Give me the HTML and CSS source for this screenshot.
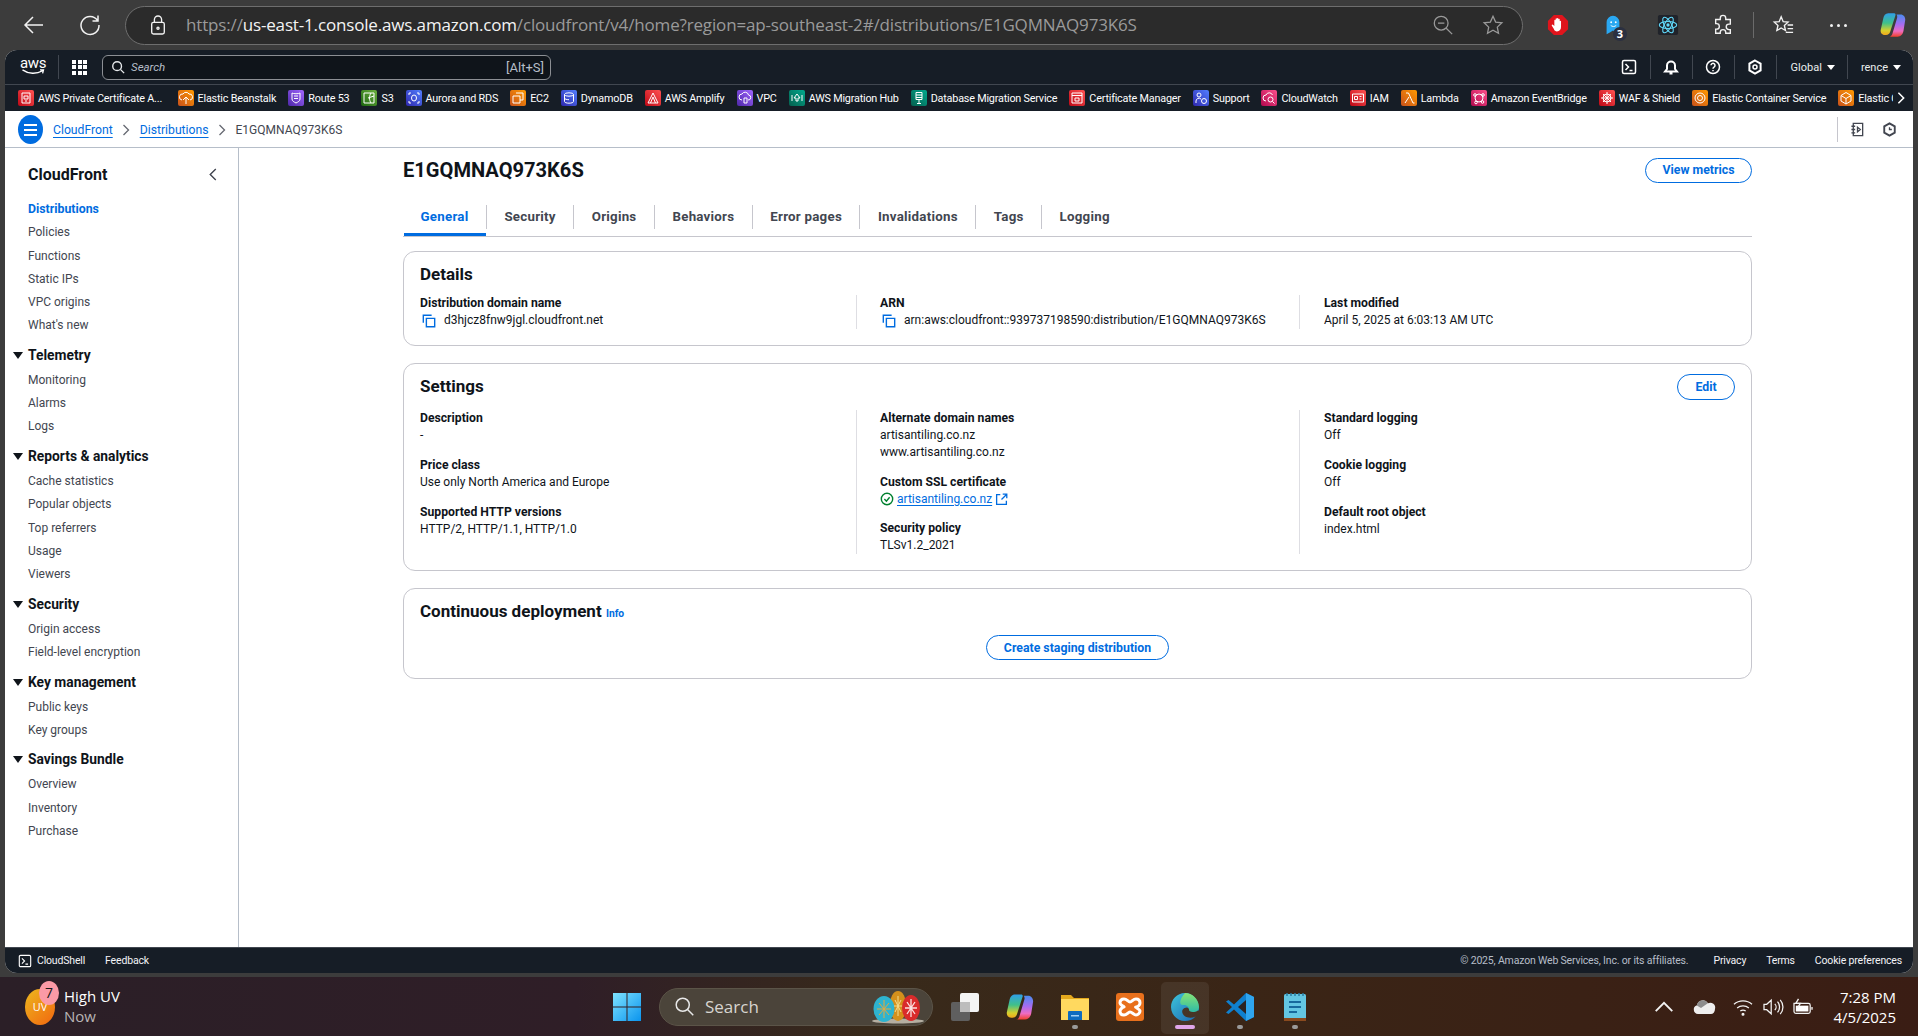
FILE: index.html
```html
<!DOCTYPE html>
<html lang="en">
<head>
    <meta charset="UTF-8">
    <title>E1GQMNAQ973K6S | Distributions | CloudFront</title>
    <link rel="stylesheet" href="styles.css">
</head>
<body>

<!-- browser toolbar -->
<header class="browser">
    <svg class="b-icon" viewBox="0 0 24 24"><path d="M21 12H3M11 4l-8 8 8 8"/></svg>
    <svg class="b-icon reload" viewBox="0 0 24 24"><path d="M19.5 7.5A9 9 0 1 0 21 12M20 2.5v5.5h-5.5"/></svg>
    <div class="urlbar">
        <svg class="lock" viewBox="0 0 20 24"><rect x="3" y="9" width="14" height="13" rx="2"/><path d="M6 9V6a4 4 0 0 1 8 0v3"/><circle cx="10" cy="15.500" r="1.200"/></svg>
        <div class="url"><span class="dim">https://</span>us-east-1.console.aws.amazon.com<span class="dim">/cloudfront/v4/home?region=ap-southeast-2#/distributions/E1GQMNAQ973K6S</span></div>
        <svg class="u-icon zoom-out" viewBox="0 0 24 24"><circle cx="10" cy="10" r="7.500"/><path d="M6.500 10h7M15.500 15.500l6.500 6.500"/></svg>
        <svg class="u-icon" viewBox="0 0 24 24"><path d="M12 2.500l2.900 6.300 6.800.8-5 4.700 1.300 6.800-6-3.400-6 3.400 1.300-6.800-5-4.700 6.800-.8z"/></svg>
    </div>
    <div class="ext-row">
        <svg class="ext" viewBox="0 0 24 24"><path d="M7.500 1h9L23 7.500v9L16.500 23h-9L1 16.500v-9z" fill="#e0141c"/><path d="M8 17c-1.500-2-2.500-3.500-3-5l1.200-.6L8 13V7c0-1 1.400-1 1.400 0v3.500V5.500c0-1 1.500-1 1.500 0V10.500V5c0-1 1.500-1 1.500 0v5.500V6c0-1 1.500-1 1.500 0v5V8c0-1 1.400-1 1.400 0v6c0 3-1.500 5-4.500 5-1.500 0-2.700-.7-3.300-2z" fill="#fff"/></svg>
        <div class="ext ghost">
            <svg viewBox="0 0 24 24"><path d="M5 22V9a7 7 0 0 1 14 0v8l-2 1-1-1-2 3-2-2-3 2z" fill="#2aa8f2"/><circle cx="10" cy="9" r="1" fill="#fff"/><circle cx="15" cy="9" r="1" fill="#fff"/><path d="M9.500 12.500c1.500 1.500 4.500 1.500 6 0" stroke="#fff" fill="none"/></svg>
            <span class="ghost-count">3</span>
        </div>
        <svg class="ext" viewBox="0 0 24 24"><rect x="1" y="1" width="22" height="22" rx="2" fill="#20232a"/><g fill="none" stroke="#61dafb" stroke-width="1.200"><ellipse cx="12" cy="12" rx="9.500" ry="3.800"/><ellipse cx="12" cy="12" rx="9.500" ry="3.800" transform="rotate(60 12 12)"/><ellipse cx="12" cy="12" rx="9.500" ry="3.800" transform="rotate(120 12 12)"/></g><circle cx="12" cy="12" r="1.800" fill="#61dafb"/></svg>
        <svg class="ext line" viewBox="0 0 24 24"><path d="M9 4.500a3 3 0 0 1 6 0V6h5v5h-1.500a3 3 0 0 0 0 6H20v4h-5v-1a3 3 0 0 0-6 0v1H4v-4.500H5a3 3 0 0 0 0-6H4V6h5z"/></svg>
        <span class="b-sep"></span>
        <svg class="ext line" viewBox="0 0 24 24"><path d="M10 3l2.200 5.400 5.300.5-4 3.600 1.200 5.500L10 15.300 5.300 18l1.200-5.500-4-3.600 5.300-.5zM17 12h6M17 16h6M15 20h8"/></svg>
        <div class="ext dots"><i></i><i></i><i></i></div>
        <svg class="ext copilot" viewBox="0 0 24 24"><use href="#copilot"/></svg>
    </div>
</header>

<div class="console">
    <!-- top navigation -->
    <nav class="topnav">
        <div class="aws-logo">
            <span class="aws-word">aws</span>
            <svg viewBox="0 0 26 8"><path d="M1 1c7 5 16 5 23 1M21 1l4 0-1 4" fill="none" stroke="#fff" stroke-width="1.500"/></svg>
        </div>
        <span class="nav-sep"></span>
        <div class="grid-btn"><i></i><i></i><i></i><i></i><i></i><i></i><i></i><i></i><i></i></div>
        <div class="searchbox">
            <svg viewBox="0 0 16 16"><circle cx="7" cy="7" r="5"/><path d="M11 11l4 4"/></svg>
            <span class="search-text">Search</span>
            <span class="search-key">[Alt+S]</span>
        </div>
        <div class="nav-right">
            <svg class="nav-icon" viewBox="0 0 16 16"><rect x="1.500" y="1.500" width="13" height="13" rx="1.500"/><path d="M4.500 5l3 3-3 3M8.500 11.500h3"/></svg>
            <span class="nav-sep"></span>
            <svg class="nav-icon" viewBox="0 0 16 16"><path d="M2 12.500h12l-2-2.500V6.500a4 4 0 0 0-8 0V10zM6.500 14.500h3" stroke-width="2"/></svg>
            <span class="nav-sep"></span>
            <svg class="nav-icon" viewBox="0 0 16 16"><circle cx="8" cy="8" r="6.500"/><path d="M6 6.300a2 2 0 1 1 3 1.800c-.7.400-1 .8-1 1.600M8 11v1.300"/></svg>
            <span class="nav-sep"></span>
            <svg class="nav-icon" viewBox="0 0 16 16"><path d="M8 1.500l5.600 3.200v6.600L8 14.500l-5.600-3.200V4.700z" stroke-width="2"/><circle cx="8" cy="8" r="2"/></svg>
            <span class="nav-sep wide"></span>
            <span class="nav-menu">Global <b class="caret"></b></span>
            <span class="nav-sep"></span>
            <span class="nav-menu">rence <b class="caret"></b></span>
        </div>
    </nav>

    <!-- favourites -->
    <div class="favbar">
        <a class="fav"><svg class="svc red" viewBox="0 0 16 16"><path d="M4 3h8v10H4zM6 6h4v3H6zM7 11h2"/></svg>AWS Private Certificate A...</a>
        <a class="fav"><svg class="svc orange" viewBox="0 0 16 16"><path d="M8 14V7M5 10l3-3 3 3M4 10a3 3 0 0 1 1-6 3.500 3.500 0 0 1 6 0 3 3 0 0 1 1 6"/></svg>Elastic Beanstalk</a>
        <a class="fav"><svg class="svc purple" viewBox="0 0 16 16"><path d="M4 3c1.500 1 6.500 1 8 0v6c0 2-2 3-4 4-2-1-4-2-4-4zM6 6h4M6 8.500h4"/></svg>Route 53</a>
        <a class="fav"><svg class="svc green" viewBox="0 0 16 16"><path d="M3 3h10v10H3zM7 8l6-2M10 3c-2 3-2 7 0 10"/></svg>S3</a>
        <a class="fav"><svg class="svc blue" viewBox="0 0 16 16"><path d="M3 5V3h2M11 3h2v2M13 11v2h-2M5 13H3v-2"/><ellipse cx="8" cy="8" rx="2.500" ry="3"/></svg>Aurora and RDS</a>
        <a class="fav"><svg class="svc orange" viewBox="0 0 16 16"><path d="M6 3h7v7h-3M3 6h7v7H3z"/></svg>EC2</a>
        <a class="fav"><svg class="svc blue" viewBox="0 0 16 16"><ellipse cx="8" cy="4.500" rx="4.500" ry="1.700"/><path d="M3.500 4.500v7c0 1 2 1.700 4.500 1.700s4.500-.7 4.500-1.700v-7M3.500 8c0 1 2 1.700 4.500 1.700"/></svg>DynamoDB</a>
        <a class="fav"><svg class="svc red" viewBox="0 0 16 16"><path d="M8 3l5 10H3zM8 7l-2.500 6M8 7l2.500 6"/></svg>AWS Amplify</a>
        <a class="fav"><svg class="svc purple" viewBox="0 0 16 16"><path d="M5 10a3 3 0 0 1 0-6 3.500 3.500 0 0 1 6.500 1 2.500 2.500 0 0 1-.5 5M7 8h3v5H7z"/></svg>VPC</a>
        <a class="fav"><svg class="svc teal" viewBox="0 0 16 16"><path d="M3 5v6M13 5v6M8 4l3 4H9v3H7V8H5z"/></svg>AWS Migration Hub</a>
        <a class="fav"><svg class="svc teal" viewBox="0 0 16 16"><path d="M5 2.500h6v7H5zM5 5h6M5 7.500h6M8 9.500v4M6 13.500h4"/></svg>Database Migration Service</a>
        <a class="fav"><svg class="svc red" viewBox="0 0 16 16"><path d="M3 3h10v10H3zM3 5.500h10M6 8h4v3H6z"/></svg>Certificate Manager</a>
        <a class="fav"><svg class="svc blue" viewBox="0 0 16 16"><circle cx="6" cy="5" r="2"/><path d="M3 13v-2a3 3 0 0 1 5-2"/><circle cx="11" cy="11" r="2.500"/></svg>Support</a>
        <a class="fav"><svg class="svc pink" viewBox="0 0 16 16"><path d="M5 11a3 3 0 0 1 0-6 3.500 3.500 0 0 1 6.500 0"/><circle cx="9.500" cy="9.500" r="2.500"/><path d="M11.500 11.500l2 2"/></svg>CloudWatch</a>
        <a class="fav"><svg class="svc red" viewBox="0 0 16 16"><path d="M2.500 4h11v8h-11zM4.500 6.500h3v3h-3zM9.500 6.500h2M9.500 9h2"/></svg>IAM</a>
        <a class="fav"><svg class="svc orange" viewBox="0 0 16 16"><path d="M5 3h2.500L12 13h1.500M8 7l-4 6"/></svg>Lambda</a>
        <a class="fav"><svg class="svc pink" viewBox="0 0 16 16"><circle cx="8" cy="8" r="4"/><circle cx="4" cy="5" r="1.300"/><circle cx="12" cy="5" r="1.300"/><circle cx="5" cy="12.500" r="1.300"/><circle cx="11.500" cy="12" r="1.300"/></svg>Amazon EventBridge</a>
        <a class="fav"><svg class="svc red" viewBox="0 0 16 16"><circle cx="8" cy="8" r="4"/><path d="M8 2v12M2 8h12M4 4l8 8M12 4l-8 8"/></svg>WAF &amp; Shield</a>
        <a class="fav"><svg class="svc orange" viewBox="0 0 16 16"><circle cx="8" cy="8" r="5"/><circle cx="8" cy="8" r="2.500"/></svg>Elastic Container Service</a>
        <a class="fav"><svg class="svc orange" viewBox="0 0 16 16"><path d="M8 2.500l5 3v5.500l-5 3-5-3V5.500zM3 5.500l5 3 5-3M8 8.500v5.500"/></svg>Elastic C</a>
        <div class="fav-more"><svg viewBox="0 0 10 16"><path d="M2 2l6 6-6 6"/></svg></div>
    </div>

    <!-- breadcrumbs -->
    <div class="crumbbar">
        <div class="menu-btn"><i></i><i></i><i></i></div>
        <a class="crumb">CloudFront</a>
        <svg class="crumb-sep" viewBox="0 0 8 12"><path d="M1.500 1l5 5-5 5"/></svg>
        <a class="crumb">Distributions</a>
        <svg class="crumb-sep" viewBox="0 0 8 12"><path d="M1.500 1l5 5-5 5"/></svg>
        <span class="crumb-current">E1GQMNAQ973K6S</span>
        <div class="crumb-tools">
            <svg viewBox="0 0 16 16"><path d="M3.500 1.500h10v13h-10zM1.500 4.500h4M1.500 8h4M1.500 11.500h4M8 5.500l3 2.500-3 2.500z"/></svg>
            <svg viewBox="0 0 16 16"><path d="M8 1.500l5.600 3.200v6.600L8 14.500l-5.600-3.200V4.700z" stroke-width="2"/><path d="M8 5.500V8h2.500"/></svg>
        </div>
    </div>

    <div class="workspace">
        <aside class="sidebar">
            <div class="side-title">
                <span>CloudFront</span>
                <svg viewBox="0 0 8 14"><path d="M7 1L1 7l6 6"/></svg>
            </div>
            <ul class="side-list">
                <li class="active">Distributions</li>
                <li>Policies</li>
                <li>Functions</li>
                <li>Static IPs</li>
                <li>VPC origins</li>
                <li>What's new</li>
            </ul>
            <h3 class="side-group">Telemetry</h3>
            <ul class="side-list">
                <li>Monitoring</li>
                <li>Alarms</li>
                <li>Logs</li>
            </ul>
            <h3 class="side-group">Reports &amp; analytics</h3>
            <ul class="side-list">
                <li>Cache statistics</li>
                <li>Popular objects</li>
                <li>Top referrers</li>
                <li>Usage</li>
                <li>Viewers</li>
            </ul>
            <h3 class="side-group">Security</h3>
            <ul class="side-list">
                <li>Origin access</li>
                <li>Field-level encryption</li>
            </ul>
            <h3 class="side-group">Key management</h3>
            <ul class="side-list">
                <li>Public keys</li>
                <li>Key groups</li>
            </ul>
            <h3 class="side-group">Savings Bundle</h3>
            <ul class="side-list">
                <li>Overview</li>
                <li>Inventory</li>
                <li>Purchase</li>
            </ul>
        </aside>

        <main class="content">
            <div class="page-head">
                <h1>E1GQMNAQ973K6S</h1>
                <button class="btn">View metrics</button>
            </div>

            <div class="tabs">
                <a class="tab current">General</a>
                <a class="tab">Security</a>
                <a class="tab">Origins</a>
                <a class="tab">Behaviors</a>
                <a class="tab">Error pages</a>
                <a class="tab">Invalidations</a>
                <a class="tab">Tags</a>
                <a class="tab">Logging</a>
            </div>

            <section class="card">
                <h2>Details</h2>
                <div class="cols">
                    <div class="col">
                        <div class="label">Distribution domain name</div>
                        <div class="value copy"><svg class="copy-ic" viewBox="0 0 16 16"><path d="M1.500 10V1.500H11M5 5h9.500v9.500H5z"/></svg>d3hjcz8fnw9jgl.cloudfront.net</div>
                    </div>
                    <div class="col">
                        <div class="label">ARN</div>
                        <div class="value copy"><svg class="copy-ic" viewBox="0 0 16 16"><path d="M1.500 10V1.500H11M5 5h9.500v9.500H5z"/></svg>arn:aws:cloudfront::939737198590:distribution/E1GQMNAQ973K6S</div>
                    </div>
                    <div class="col">
                        <div class="label">Last modified</div>
                        <div class="value">April 5, 2025 at 6:03:13 AM UTC</div>
                    </div>
                </div>
            </section>

            <section class="card">
                <div class="card-head">
                    <h2>Settings</h2>
                    <button class="btn small">Edit</button>
                </div>
                <div class="cols roomy">
                    <div class="col">
                        <div class="field">
                            <div class="label">Description</div>
                            <div class="value">-</div>
                        </div>
                        <div class="field">
                            <div class="label">Price class</div>
                            <div class="value">Use only North America and Europe</div>
                        </div>
                        <div class="field">
                            <div class="label">Supported HTTP versions</div>
                            <div class="value">HTTP/2, HTTP/1.1, HTTP/1.0</div>
                        </div>
                    </div>
                    <div class="col">
                        <div class="field">
                            <div class="label">Alternate domain names</div>
                            <div class="value">artisantiling.co.nz</div>
                            <div class="value">www.artisantiling.co.nz</div>
                        </div>
                        <div class="field">
                            <div class="label">Custom SSL certificate</div>
                            <div class="value cert">
                                <svg class="ok-ic" viewBox="0 0 16 16"><circle cx="8" cy="8" r="6.500"/><path d="M5 8l2.300 2.500L11 6"/></svg>
                                <a class="link">artisantiling.co.nz <svg class="ext-ic" viewBox="0 0 16 16"><path d="M6.500 2H2v12h12V9.500M9.500 1.500h5v5M14.500 1.500L8 8"/></svg></a>
                            </div>
                        </div>
                        <div class="field">
                            <div class="label">Security policy</div>
                            <div class="value">TLSv1.2_2021</div>
                        </div>
                    </div>
                    <div class="col">
                        <div class="field">
                            <div class="label">Standard logging</div>
                            <div class="value">Off</div>
                        </div>
                        <div class="field">
                            <div class="label">Cookie logging</div>
                            <div class="value">Off</div>
                        </div>
                        <div class="field">
                            <div class="label">Default root object</div>
                            <div class="value">index.html</div>
                        </div>
                    </div>
                </div>
            </section>

            <section class="card deploy">
                <h2>Continuous deployment <a class="info">Info</a></h2>
                <div class="center-row">
                    <button class="btn">Create staging distribution</button>
                </div>
            </section>
        </main>
    </div>

    <footer class="console-foot">
        <svg viewBox="0 0 16 16"><rect x="1.500" y="1.500" width="13" height="13" rx="1.500"/><path d="M4.500 5l3 3-3 3M8.500 11.500h3"/></svg>
        <span class="foot-link">CloudShell</span>
        <span class="foot-link">Feedback</span>
        <span class="foot-copy">© 2025, Amazon Web Services, Inc. or its affiliates.</span>
        <span class="foot-link">Privacy</span>
        <span class="foot-link">Terms</span>
        <span class="foot-link">Cookie preferences</span>
    </footer>
</div>

<!-- windows taskbar -->
<div class="taskbar">
    <div class="widget">
        <div class="uv">UV<span class="uv-badge">7</span></div>
        <div class="widget-text">
            <div>High UV</div>
            <div class="now">Now</div>
        </div>
    </div>

    <div class="task-center">
        <svg class="task-ic" viewBox="0 0 30 30"><defs><linearGradient id="win" x1="0" y1="0" x2="1" y2="1"><stop offset="0" stop-color="#7fe3ff"/><stop offset="1" stop-color="#0a94ee"/></linearGradient></defs><path d="M1 1h13.500v13.500H1zM15.500 1H29v13.500H15.500zM1 15.500h13.500V29H1zM15.500 15.500H29V29H15.500z" fill="url(#win)"/></svg>
        <div class="task-search">
            <svg viewBox="0 0 24 24"><circle cx="10" cy="10" r="7.500"/><path d="M15.500 15.500L22 22"/></svg>
            <span>Search</span>
            <svg class="eggs" viewBox="0 0 56 34"><ellipse cx="28" cy="31" rx="26" ry="2.500" fill="#d8d2c4" opacity=".75"/><ellipse cx="28" cy="16" rx="8.500" ry="15" fill="#d4901c"/><ellipse cx="41" cy="18" rx="9" ry="13" fill="#d92b2b"/><ellipse cx="14" cy="19" rx="10.500" ry="13" fill="#2eb3cf"/><path d="M14 10v18M7 19h14M9 13l10 12M19 13L9 25" stroke="#e8a83a" stroke-width="1"/><path d="M28 6v20M24 16h8M25 10l6 12M31 10l-6 12" stroke="#f5dc8c" stroke-width="1"/><path d="M41 9v18M35 18h12M37 12l8 12M45 12l-8 12" stroke="#fbe1e1" stroke-width="1.300"/></svg>
        </div>
        <svg class="task-ic" viewBox="0 0 30 30"><rect x="1" y="10" width="19" height="19" rx="2" fill="#5f5f5f"/><rect x="10" y="1" width="19" height="19" rx="2" fill="#f4f4f4"/><rect x="10" y="10" width="10" height="10" fill="#bdbdbd"/></svg>
        <svg class="task-ic" viewBox="0 0 24 24"><use href="#copilot"/></svg>
        <div class="task-slot">
            <svg class="task-ic" viewBox="0 0 30 30"><path d="M1 3h10l3 3h15v22H1z" fill="#e5a91d"/><rect x="1" y="7" width="28" height="21" fill="#ffd95f"/><path d="M9 19h12a1 1 0 0 1 1 1v8H8v-8a1 1 0 0 1 1-1z" fill="#0d6cbf"/><rect x="11" y="23" width="8" height="1.500" fill="#9fd0f5"/></svg>
            <i class="run-dot"></i>
        </div>
        <svg class="task-ic" viewBox="0 0 30 30"><rect x="1" y="1" width="28" height="28" rx="3" fill="#e8701c"/><path d="M9 7c3 0 4 3 6 3s3-3 6-3 4 2 4 4-2 4-4 4 4 2 4 4-2 4-4 4-4-3-6-3-3 3-6 3-4-2-4-4 3-4 4-4-4-2-4-4 1-4 4-4z" fill="none" stroke="#fff" stroke-width="3"/></svg>
        <div class="task-slot active">
            <svg class="task-ic" viewBox="0 0 30 30"><defs><linearGradient id="edgeA" x1="0" y1="0" x2="1" y2="1"><stop offset="0" stop-color="#2fc2d8"/><stop offset="1" stop-color="#0a5bb0"/></linearGradient><linearGradient id="edgeB" x1="0" y1="0" x2="0" y2="1"><stop offset="0" stop-color="#7fe26a"/><stop offset="1" stop-color="#1fb6a0"/></linearGradient></defs><path d="M15 1C7 1 1 7.500 1 15c0 8 6.500 14 14 14 4 0 8-1.500 10.500-4.500-4 2-9 1.500-11.500-1-2.500-2.500-2.500-6 .5-7.500 3-1.500 5 .5 5 2.500h9.500C29 9 24 1 15 1z" fill="url(#edgeA)"/><path d="M15 1c7 0 14 6 14 14 0 4-3 5-6 5-3 0-4-1-4-2.500 0-3-3-5-6-4.500C10 13.500 8 9 15 1z" fill="url(#edgeB)"/></svg>
            <i class="run-dot wide"></i>
        </div>
        <div class="task-slot">
            <svg class="task-ic" viewBox="0 0 30 30"><path d="M21 1l8 4v20l-8 4-12-11.500L3.500 22 1 20.500 7 15 1 9.500 3.500 8 9 12.500z" fill="#0f80cf"/><path d="M21 8L13 15l8 7z" fill="#2b2222"/><path d="M21 1l8 4v20l-8 4z" fill="#2fa5ee"/></svg>
            <i class="run-dot"></i>
        </div>
        <div class="task-slot">
            <svg class="task-ic" viewBox="0 0 30 30"><rect x="4" y="2" width="22" height="27" rx="1.500" fill="#63c6e2"/><rect x="4" y="26" width="22" height="3" fill="#8a4a1e"/><path d="M9 10h12M9 15h12M9 20h8" stroke="#176a9c" stroke-width="2"/><path d="M7 1v3M11 1v3M15 1v3M19 1v3M23 1v3" stroke="#2a7ea3" stroke-width="1.500"/></svg>
            <i class="run-dot"></i>
        </div>
    </div>

    <div class="tray">
        <svg class="tray-ic" viewBox="0 0 16 10"><path d="M2 8l6-6 6 6"/></svg>
        <svg class="cloud" viewBox="0 0 24 16"><path d="M6 15a4.500 4.500 0 0 1-1-8.800 6 6 0 0 1 11-2A5 5 0 0 1 23 10c0 3-2 5-4 5z" fill="#eee"/><path d="M4.800 6.400a6 6 0 0 1 11-2.200L9 9z" fill="#8d8d8d"/></svg>
        <svg class="tray-ic wifi" viewBox="0 0 24 20"><path d="M2 7c5.500-5 14.500-5 20 0M5.500 11c3.500-3 9.500-3 13 0M9 14.500c1.500-1 4.500-1 6 0"/><circle cx="12" cy="18" r="1" fill="#fff"/></svg>
        <svg class="tray-ic" viewBox="0 0 24 20"><path d="M2 7v6h3l5 4.500V2.500L5 7zM14 6.500a5 5 0 0 1 0 7M17 4a9 9 0 0 1 0 12M20 2a12 12 0 0 1 0 16"/></svg>
        <svg class="tray-ic batt" viewBox="0 0 24 20"><path d="M2 6h16a2 2 0 0 1 2 2v7a2 2 0 0 1-2 2H4a2 2 0 0 1-2-2z"/><path d="M4 8.500h14v6.500H4z" fill="#fff" stroke="none"/><path d="M22 10v3M7 1L4 6h5l-3 5" stroke-width="1.500"/></svg>
        <div class="clock">
            <div>7:28 PM</div>
            <div>4/5/2025</div>
        </div>
    </div>
</div>

<svg class="defs" width="0" height="0">
    <defs>
        <linearGradient id="coA" x1="0.300" y1="0" x2="0.300" y2="1"><stop offset="0" stop-color="#2f9fe8"/><stop offset=".45" stop-color="#3fc08a"/><stop offset=".8" stop-color="#d8cf2c"/><stop offset="1" stop-color="#f2a81c"/></linearGradient>
        <linearGradient id="coB" x1="0.500" y1="0" x2="0.500" y2="1"><stop offset="0" stop-color="#4a8cf0"/><stop offset=".45" stop-color="#a76cf0"/><stop offset=".75" stop-color="#ee6cc0"/><stop offset="1" stop-color="#f0402c"/></linearGradient>
        <symbol id="copilot" viewBox="0 0 24 24">
            <path d="M8 2h5c1 0 1.500 1 1 2l-4.500 14c-.5 1.500-1.500 2.500-3.500 2.500H5C2.500 20.500 1 18.500 1.500 16l2-9C4 4 5.500 2 8 2z" fill="url(#coA)"/>
            <path d="M15 3h3.500c2.500 0 4 2 4 4.500L21 17c-.5 3-2.500 5-5 5H9c1 0 2-1 2.500-2.500L15.500 6c.3-1 .2-2-.5-3z" fill="url(#coB)"/>
        </symbol>
    </defs>
</svg>

</body>
</html>
```

FILE: styles.css
```css
/* ===== page ===== */
* {
    box-sizing: border-box;
}

body {
    margin: 0;
    height: 100vh;
    display: flex;
    flex-direction: column;
    overflow: hidden;
    background: #3c3c3c;
    font-family: "Roboto", "Liberation Sans", sans-serif;
    font-size: 12px;
    color: #000716;
}

svg {
    display: block;
    flex: none;
}

h1, h2, h3, ul {
    margin: 0;
    padding: 0;
}

.defs {
    position: absolute;
}

/* ===== browser toolbar ===== */
.browser {
    height: 50px;
    flex: none;
    display: flex;
    align-items: center;
    padding-left: 22px;
    font-family: "Open Sans", sans-serif;
}

.b-icon {
    width: 24px;
    height: 24px;
    fill: none;
    stroke: #f2f2f2;
    stroke-width: 1.500;
}

.b-icon.reload {
    margin-left: 32px;
}

.urlbar {
    margin-left: 23px;
    width: 1398px;
    height: 39px;
    flex: none;
    display: flex;
    align-items: center;
    padding: 0 18px 0 23px;
    background: #2b2b2b;
    border: 1px solid #6e6e6e;
    border-radius: 20px;
}

.lock {
    width: 18px;
    height: 22px;
    fill: none;
    stroke: #f2f2f2;
    stroke-width: 1.500;
}

.url {
    margin-left: 19px;
    padding-bottom: 2px;
    flex: 1;
    font-size: 17px;
    color: #f4f4f4;
    white-space: nowrap;
    letter-spacing: -0.16px;
}

.dim {
    color: #9a9a9a;
}

.u-icon {
    width: 22px;
    height: 22px;
    fill: none;
    stroke: #9a9a9a;
    stroke-width: 1.400;
}

.zoom-out {
    margin-right: 28px;
}

.ext-row {
    display: flex;
    align-items: center;
    margin-left: 24px;
}

.ext {
    width: 22px;
    height: 22px;
    margin-right: 33px;
}

.ext.line {
    fill: none;
    stroke: #f2f2f2;
    stroke-width: 1.500;
}

.ghost {
    position: relative;
}

.ghost-count {
    position: absolute;
    left: 11px;
    top: 13px;
    width: 14px;
    height: 14px;
    border-radius: 7px;
    background: #2b3040;
    color: #fff;
    font-size: 11px;
    font-weight: 700;
    line-height: 14px;
    text-align: center;
}

.b-sep {
    width: 1px;
    height: 26px;
    background: #6b6b6b;
    margin-left: -14px;
    margin-right: 18px;
}

.dots {
    display: flex;
    align-items: center;
    justify-content: center;
    gap: 4px;
}

.dots i {
    width: 3px;
    height: 3px;
    border-radius: 50%;
    background: #f2f2f2;
}

.copilot {
    width: 28px;
    height: 28px;
    margin-left: -3px;
    margin-right: 0;
}

/* ===== console frame ===== */
.console {
    height: 923px;
    flex: none;
    margin: 0 5px;
    display: flex;
    flex-direction: column;
    border-radius: 12px;
    overflow: hidden;
    background: #fff;
}

/* ===== top nav ===== */
.topnav {
    height: 34px;
    flex: none;
    display: flex;
    align-items: center;
    padding: 0 12px 0 15px;
    background: #161d26;
    color: #fff;
}

.aws-logo {
    width: 26px;
    color: #fff;
}

.aws-word {
    display: block;
    font-size: 15px;
    line-height: 11px;
    text-align: center;
    letter-spacing: -0.3px;
}

.aws-logo svg {
    width: 26px;
    height: 7px;
}

.nav-sep {
    width: 1px;
    height: 24px;
    background: #414750;
}

.topnav > .nav-sep {
    margin: 0 13px 0 12px;
}

.grid-btn {
    width: 15px;
    display: grid;
    grid-template-columns: repeat(3, 4px);
    gap: 1.500px;
}

.grid-btn i {
    height: 4px;
    background: #fff;
}

.searchbox {
    margin-left: 15px;
    width: 449px;
    height: 25px;
    display: flex;
    align-items: center;
    padding: 0 6px 0 8px;
    background: #0f141a;
    border: 1px solid #8c8f94;
    border-radius: 6px;
    color: #b6bec9;
    font-size: 11.500px;
}

.searchbox svg {
    width: 14px;
    height: 14px;
    fill: none;
    stroke: #e6e8ea;
    stroke-width: 1.600;
}

.search-text {
    margin-left: 6px;
    flex: 1;
    font-style: italic;
}

.search-key {
    font-size: 13px;
}

.nav-right {
    margin-left: auto;
    display: flex;
    align-items: center;
}

.nav-right .nav-sep {
    margin: 0 12.500px;
}

.nav-right .nav-sep.wide {
    margin-right: 14px;
}

.nav-icon {
    width: 16px;
    height: 16px;
    fill: none;
    stroke: #fff;
    stroke-width: 1.500;
}

.nav-menu {
    display: flex;
    align-items: center;
    gap: 5px;
    font-size: 11px;
    color: #eaeded;
}

.caret {
    width: 0;
    height: 0;
    border-left: 4px solid transparent;
    border-right: 4px solid transparent;
    border-top: 5px solid #fff;
}

/* ===== favourites ===== */
.favbar {
    height: 27px;
    flex: none;
    position: relative;
    display: flex;
    align-items: center;
    gap: 12px;
    padding-left: 13px;
    background: #161d26;
    border-top: 1px solid #414750;
    white-space: nowrap;
    color: #fff;
    font-size: 10.800px;
    letter-spacing: -0.2px;
}

.fav {
    display: flex;
    align-items: center;
    gap: 4px;
}

.fav:first-child {
    margin-right: 3.500px;
}

.svc {
    width: 16px;
    height: 16px;
    padding: 0;
    border-radius: 2px;
    fill: none;
    stroke: #fff;
    stroke-width: 1;
}

.red { background: linear-gradient(45deg, #bd0816, #ff5252); }
.orange { background: linear-gradient(45deg, #c8511b, #ff9900); }
.purple { background: linear-gradient(45deg, #4d27a8, #a166ff); }
.green { background: linear-gradient(45deg, #1b660f, #6cae3e); }
.blue { background: linear-gradient(45deg, #2e27ad, #527fff); }
.teal { background: linear-gradient(45deg, #055f4e, #01a88d); }
.pink { background: linear-gradient(45deg, #b0084d, #ff4f8b); }

.fav-more {
    position: absolute;
    right: 0;
    top: 0;
    bottom: 0;
    width: 20px;
    padding-left: 3px;
    display: flex;
    align-items: center;
    background: #161d26;
}

.fav-more svg {
    width: 10px;
    height: 14px;
    fill: none;
    stroke: #fff;
    stroke-width: 1.800;
}

/* ===== breadcrumbs ===== */
.crumbbar {
    height: 37px;
    flex: none;
    display: flex;
    align-items: center;
    padding: 1px 0 0 13px;
    background: #fff;
    border-bottom: 1px solid #b6bec9;
    font-size: 12.200px;
}

.menu-btn {
    width: 25px;
    height: 29px;
    border-radius: 50%;
    background: #006ce0;
    display: flex;
    flex-direction: column;
    align-items: center;
    justify-content: center;
    gap: 3px;
}

.menu-btn i {
    width: 13px;
    height: 2px;
    background: #fff;
}

.crumb {
    color: #006ce0;
    text-decoration: underline;
    text-underline-offset: 3px;
}

.menu-btn + .crumb {
    margin-left: 10px;
}

.crumb-sep {
    width: 8px;
    height: 12px;
    margin: 0 9.500px;
    fill: none;
    stroke: #656871;
    stroke-width: 1.300;
}

.crumb-current {
    font-size: 12px;
    color: #424650;
}

.crumb-tools {
    margin-left: auto;
    display: flex;
    align-items: center;
    gap: 17px;
    height: 25px;
    padding: 0 16px 0 12px;
    border-left: 1px solid #c6c6cd;
}

.crumb-tools svg {
    width: 15px;
    height: 15px;
    fill: none;
    stroke: #424650;
    stroke-width: 1.400;
}

/* ===== workspace ===== */
.workspace {
    flex: 1;
    min-height: 0;
    display: flex;
}

.sidebar {
    width: 234px;
    flex: none;
    padding: 16px 0 0 23px;
    border-right: 1px solid #b6bec9;
    color: #424650;
}

.side-title {
    display: flex;
    align-items: center;
    justify-content: space-between;
    height: 20px;
    padding-right: 21px;
    margin-bottom: 14px;
    font-size: 16px;
    font-weight: 700;
    color: #0f141a;
}

.side-title svg {
    width: 8px;
    height: 13px;
    fill: none;
    stroke: #424650;
    stroke-width: 1.500;
}

.side-list {
    list-style: none;
}

.side-list li {
    height: 23.250px;
    line-height: 23.250px;
}

.side-list .active {
    color: #006ce0;
    font-size: 12.300px;
    font-weight: 700;
}

.side-group {
    position: relative;
    height: 25px;
    margin-top: 6.400px;
    line-height: 23px;
    font-size: 13.800px;
    font-weight: 700;
    color: #0f141a;
}

.side-group::before {
    content: "";
    position: absolute;
    left: -15px;
    top: 8px;
    border-left: 5px solid transparent;
    border-right: 5px solid transparent;
    border-top: 7px solid #0f141a;
}

/* ===== main content ===== */
.content {
    flex: 1;
    min-width: 0;
    padding: 9px 161px 0 164px;
}

.page-head {
    height: 26px;
    display: flex;
    align-items: center;
    justify-content: space-between;
}

h1 {
    font-size: 20.100px;
    font-weight: 700;
    color: #0f141a;
}

.btn {
    height: 25px;
    padding: 0 16.500px;
    background: #fff;
    border: 1.500px solid #006ce0;
    border-radius: 13px;
    color: #006ce0;
    font-family: inherit;
    font-size: 12.300px;
    font-weight: 700;
}

.btn.small {
    height: 26px;
    width: 58px;
    padding: 0;
}

.tabs {
    height: 41px;
    margin-top: 13px;
    padding-top: 2px;
    display: flex;
    align-items: center;
    border-bottom: 1px solid #c6c6cd;
}

.tab {
    height: 24px;
    line-height: 24px;
    padding: 0 17.500px;
    border-left: 1px solid #c6c6cd;
    color: #424650;
    font-size: 13.300px;
    font-weight: 700;
    letter-spacing: 0.25px;
}

.tab.current {
    position: relative;
    border-left: 0;
    color: #006ce0;
}

.tab.current::after {
    content: "";
    position: absolute;
    left: 1px;
    right: 0;
    top: 28px;
    height: 3px;
    background: #006ce0;
}

.card {
    margin-top: 14px;
    padding: 8px 16px 16px;
    border: 1px solid #c6c6cd;
    border-radius: 12px;
    background: #fff;
}

.card + .card {
    margin-top: 17px;
}

.card.deploy {
    margin-top: 17px;
    padding-bottom: 18px;
}

h2 {
    height: 28px;
    line-height: 28px;
    font-size: 17px;
    font-weight: 700;
    color: #0f141a;
}

.card-head {
    display: flex;
    justify-content: space-between;
    height: 28px;
}

.card-head .btn {
    margin-top: 2px;
}

.info {
    color: #006ce0;
    font-size: 10.300px;
}

.cols {
    display: grid;
    grid-template-columns: 436px 443px 1fr;
    margin-top: 7px;
}

.cols.roomy {
    margin-top: 10px;
}

.col {
    padding-left: 23px;
    border-left: 1px solid #dedee3;
}

.col:first-child {
    padding-left: 0;
    border-left: 0;
}

.col:last-child {
    padding-left: 24px;
}

.label {
    line-height: 17px;
    font-size: 12.200px;
    font-weight: 700;
    color: #0f141a;
}

.value {
    line-height: 17px;
    color: #0f141a;
}

.field {
    margin-bottom: 13px;
}

.field:last-child {
    margin-bottom: 0;
}

.copy,
.cert {
    display: flex;
    align-items: center;
}

.cert {
    height: 16px;
}

.copy-ic {
    width: 14px;
    height: 14px;
    margin: 0 8px 0 2px;
    fill: none;
    stroke: #006ce0;
    stroke-width: 1.600;
}

.ok-ic {
    width: 14px;
    height: 14px;
    margin-right: 3px;
    fill: none;
    stroke: #00802f;
    stroke-width: 1.600;
}

.link {
    display: flex;
    align-items: center;
    gap: 3px;
    color: #006ce0;
    text-decoration: underline;
    text-underline-offset: 2px;
}

.ext-ic {
    width: 13px;
    height: 13px;
    fill: none;
    stroke: #006ce0;
    stroke-width: 1.600;
}

.center-row {
    display: flex;
    justify-content: center;
    margin-top: 10px;
}

/* ===== console footer ===== */
.console-foot {
    height: 26px;
    flex: none;
    display: flex;
    align-items: center;
    gap: 20px;
    padding: 0 11px 0 13px;
    background: #161d26;
    border-top: 1px solid #414750;
    color: #fff;
    font-size: 10.500px;
    letter-spacing: -0.17px;
}

.console-foot svg {
    width: 14px;
    height: 14px;
    margin-right: -15px;
    fill: none;
    stroke: #fff;
    stroke-width: 1.300;
}

.foot-link {
    color: #f3f3f7;
}

.foot-copy {
    margin-left: auto;
    margin-right: 5px;
    color: #b6bec9;
}

/* ===== taskbar ===== */
.taskbar {
    height: 59px;
    margin-top: 4px;
    flex: none;
    position: relative;
    display: flex;
    align-items: center;
    justify-content: space-between;
    background: linear-gradient(90deg, #2b1f27 0%, #2f1e27 30%, #382a1b 45%, #3a2516 65%, #3a1d14 100%);
    color: #fff;
    font-family: "Open Sans", sans-serif;
}

.widget {
    display: flex;
    align-items: center;
    gap: 9px;
    padding-left: 25px;
    font-size: 15px;
    line-height: 20px;
}

.widget-text {
    margin-top: -2px;
}

.uv {
    position: relative;
    width: 30px;
    height: 36px;
    border-radius: 50%;
    background: linear-gradient(135deg, #ecb81e, #f2660f);
    font-size: 11px;
    line-height: 36px;
    text-align: center;
}

.uv-badge {
    position: absolute;
    left: 14px;
    top: -8px;
    width: 20px;
    height: 24px;
    border-radius: 50%;
    background: #fb9aa6;
    color: #1a1a1a;
    font-size: 14px;
    line-height: 24px;
}

.now {
    color: #b9b5b5;
}

.task-center {
    position: absolute;
    left: 612px;
    top: 0;
    height: 59px;
    display: flex;
    align-items: center;
    gap: 25px;
}

.task-ic {
    width: 30px;
    height: 30px;
}

.task-search {
    width: 274px;
    height: 38px;
    margin-left: -8px;
    margin-right: -8px;
    display: flex;
    align-items: center;
    padding-left: 14px;
    background: #4b443a;
    border: 1px solid #5b5448;
    border-radius: 19px;
    color: #d8d5d0;
    font-size: 17px;
}

.task-search svg {
    width: 21px;
    height: 21px;
    fill: none;
    stroke: #e8e8e8;
    stroke-width: 1.700;
}

.task-search span {
    margin-left: 10px;
    flex: 1;
}

.task-search .eggs {
    width: 56px;
    height: 34px;
    margin-right: 6px;
    fill: initial;
    stroke: none;
}

.task-slot {
    position: relative;
}

.task-slot.active::before {
    content: "";
    position: absolute;
    left: -9px;
    top: -10px;
    width: 48px;
    height: 52px;
    background: rgba(255, 255, 255, 0.07);
    border-radius: 5px;
}

.run-dot {
    position: absolute;
    left: 12px;
    bottom: -7px;
    width: 6px;
    height: 4px;
    border-radius: 2px;
    background: #9a9a9a;
}

.run-dot.wide {
    left: 5px;
    width: 20px;
    background: #e0a6ea;
}

.tray {
    display: flex;
    align-items: center;
    padding-right: 22px;
}

.tray-ic {
    width: 22px;
    height: 18px;
    margin-right: 8px;
    fill: none;
    stroke: #f2f2f2;
    stroke-width: 1.400;
}

.tray .cloud {
    width: 24px;
    height: 16px;
    margin: 0 16px 0 9.500px;
}

.tray .batt {
    margin-right: 2px;
}

.clock {
    width: 80px;
    font-size: 15px;
    line-height: 20px;
    text-align: right;
}
```
